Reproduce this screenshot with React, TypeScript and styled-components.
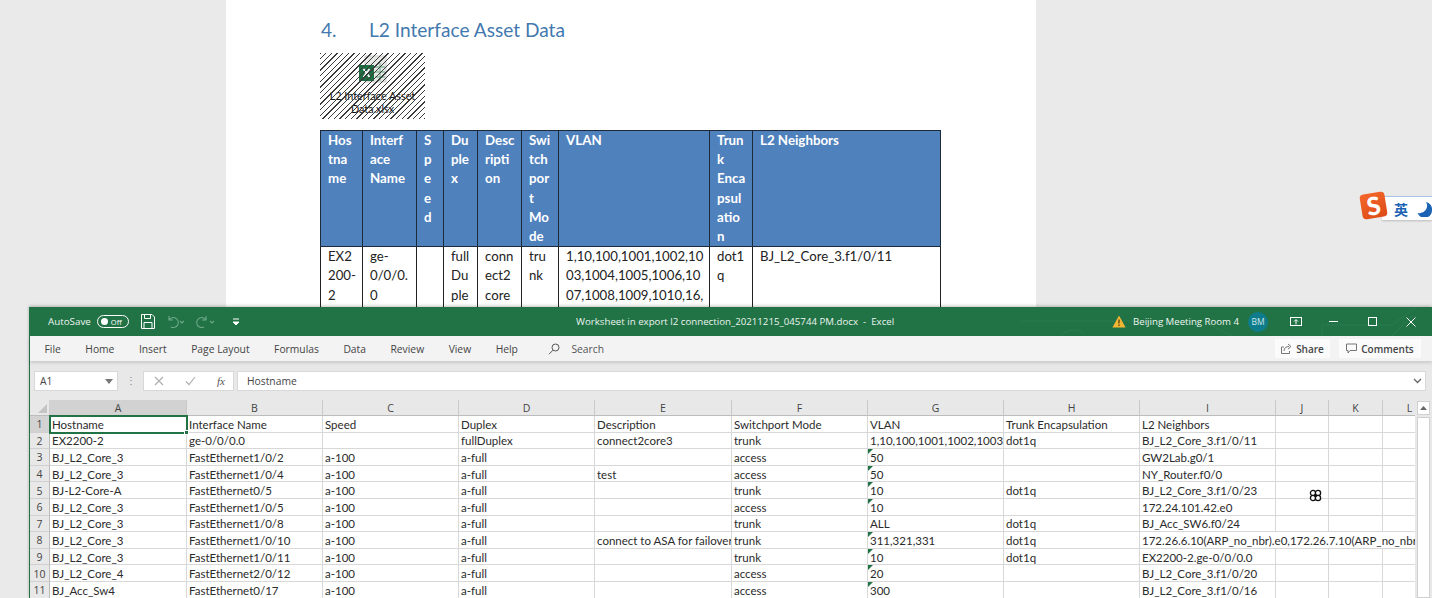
import React from "react";
import styled, { createGlobalStyle } from "styled-components";

const Global = createGlobalStyle`
  html, body { margin: 0; padding: 0; width: 100%; height: 100%; overflow: hidden; background: #eaeaea; }
  #root { width: 1432px; height: 598px; overflow: hidden; position: relative; }
`;

const Desk = styled.div`
  width: 1432px; height: 598px; position: relative; overflow: hidden;
  display: flex; justify-content: flex-start; background: #eaeaea;
`;
const DocPage = styled.div`
  margin-left: 226px; width: 810px; height: 598px; background: #fff; box-sizing: border-box;
  padding: 17px 0 0 94px;
  font-family: Lato, "Liberation Sans", sans-serif; color: #1f1f1f;
`;
const Heading = styled.h2`
  margin: 0 0 0 1px; display: flex; font-weight: 400; font-size: 19.1px; line-height: 25px; color: #4379ae;
  font-family: Lato, "Liberation Sans", sans-serif;
`;
const HeadingNum = styled.span` width: 48px; `;
const Embed = styled.div`
  margin-top: 11px; width: 105px; height: 66px; position: relative; display: flex; flex-direction: column; align-items: center;
  background: #fff;
  &::after {
    content: ""; position: absolute; inset: 0;
    background: repeating-linear-gradient(135deg, #3a3a3a 0, #3a3a3a .9px, transparent .9px, transparent 4px);
  }
`;
const EmbedIcon = styled.svg` margin-top: 2px; display: block; `;
const EmbedLabel = styled.div`
  margin-top: 7px; font-size: 10.8px; line-height: 12.5px; text-align: center; color: #111; white-space: nowrap;
`;
const DocTable = styled.table`
  margin-top: 11px; border-collapse: collapse; table-layout: fixed; width: 620px;
  font-size: 13.2px; line-height: 19.2px;
`;
const DocHead = styled.th`
  background: #4f81bd; color: #fff; border: 1px solid #1c2a3a; text-align: left; vertical-align: top; font-weight: 700;
  padding: 0 2px 0 7px; height: 115px; box-sizing: border-box; font-size: 13.3px;
`;
const DocCell = styled.td`
  border: 1px solid #222; vertical-align: top; padding: 0 2px 0 7px; background: #fff; color: #222; height: 120px;
`;

const Win = styled.div`
  position: absolute; left: 29px; top: 307px; width: 1403px; height: 291px; display: flex; flex-direction: column;
  background: #e8e8e8; border-left: 1px solid #217346; box-sizing: border-box; box-shadow: 0 -1px 3px rgba(0,0,0,.25);
  font-family: "Open Sans", "Noto Sans", sans-serif;
`;
const TitleBar = styled.div`
  height: 29px; flex: none; background: #217346; color: #fff; display: flex; align-items: center; position: relative; overflow: hidden;
  font-size: 10px; 
`;
const TitleLeft = styled.div` width: 546px; flex: none; display: flex; align-items: center; padding-left: 18px; box-sizing: border-box; `;
const AutoSave = styled.span` font-size: 9.8px; color: #eef5f0; `;
const Toggle = styled.span`
  margin-left: 6px; width: 32px; height: 13px; border: 1px solid #fff; border-radius: 7px; display: flex; align-items: center; box-sizing: border-box;
  padding: 0 1px; font-size: 7.5px; gap: 3px; 
`;
const Knob = styled.span` width: 7px; height: 7px; margin-left: 2px; border-radius: 50%; background: #fff; `;
const QuickIcon = styled.svg<{ $ml: number }>` margin-left: ${p => p.$ml}px; flex: none; display: block; `;
const TitleText = styled.div` font-size: 9.7px; color: #eaf3ee; white-space: nowrap; `;
const TitleRight = styled.div` margin-left: auto; display: flex; align-items: center; padding-right: 16px; position: relative; z-index: 1; `;
const RoomName = styled.span` margin-left: 7px; font-size: 9.65px; color: #eef5f0; white-space: nowrap; `;
const Avatar = styled.span`
  margin-left: 9px; width: 20px; height: 20px; border-radius: 50%; background: #0e7c8a; color: #cfe7ea; font-size: 8.5px;
  display: flex; align-items: center; justify-content: center;
`;
const Circuit = styled.svg` position: absolute; right: 0; top: 0; opacity: .35; `;

const Ribbon = styled.div`
  height: 25px; flex: none; background: #f3f3f3; display: flex; align-items: center; padding-left: 14.5px; gap: 24.5px;
  font-size: 10.3px; color: #444; box-shadow: 0 2px 3px rgba(0,0,0,.13); position: relative; z-index: 1;
`;
const Tab = styled.span` white-space: nowrap; `;
const SearchBox = styled.span` display: flex; align-items: center; gap: 11px; margin-left: 6px; color: #555; `;
const RibbonRight = styled.div` margin-left: auto; display: flex; gap: 9px; padding-right: 11px; `;
const RibbonBtn = styled.span<{ $w: number }>`
  height: 19px; background: #fbfbfb; border-radius: 1px; display: flex; align-items: center; justify-content: center; gap: 4px;
  padding: 0 5px; color: #444; font-size: 10px; font-weight: 600; box-sizing: border-box; width: ${p => p.$w}px;
`;

const FormulaRow = styled.div`
  height: 39px; flex: none; display: flex; align-items: flex-start; padding: 10px 6px 0 4px; box-sizing: border-box; background: #e8e8e8;
  font-size: 10.3px; color: #444;
`;
const NameBox = styled.div`
  width: 84px; height: 20px; background: #fff; border: 1px solid #d8d8d8; box-sizing: border-box; display: flex; align-items: center;
  justify-content: space-between; padding: 0 4px 0 5px;
`;
const Dots = styled.div` width: 25px; text-align: center; color: #888; font-size: 10px; line-height: 18px; `;
const FxBox = styled.div`
  width: 91px; height: 20px; background: #fff; border: 1px solid #d8d8d8; box-sizing: border-box; display: flex; align-items: center;
  padding: 0 8px 0 10px; justify-content: space-between; color: #555;
`;
const Fx = styled.span` font-family: "Liberation Serif", serif; font-style: italic; font-size: 11px; `;
const FormulaInput = styled.div`
  flex: 1; margin-left: 3px; height: 20px; background: #fff; border: 1px solid #d8d8d8; box-sizing: border-box;
  display: flex; align-items: center; justify-content: space-between; padding: 0 3px 0 9px;
`;

const SheetWrap = styled.div` flex: 1; min-height: 0; display: flex; overflow: hidden; background: #fff; `;
const Grid = styled.div`
  flex: 1; min-width: 0; overflow: hidden; display: grid;
  grid-template-columns: 20px 137px 136px 136px 136px 137px 136px 136px 136px 136px 53px 54px 54px;
  grid-template-rows: 16px repeat(11, 16.6px);
  font-family: Lato, "Liberation Sans", sans-serif; font-size: 11.5px; color: #2b2b2b;
`;
const Corner = styled.div`
  background: #e8e8e8; border-right: 1px solid #cfcfcf; border-bottom: 1px solid #bcbcbc; position: relative; box-sizing: border-box;
  &::after { content: ""; position: absolute; right: 2px; bottom: 2px; border-style: solid; border-width: 0 0 9px 9px; border-color: transparent transparent #c4c4c4 transparent; }
`;
const ColHead = styled.div<{ $on?: boolean }>`
  background: ${p => (p.$on ? "#d2d2d2" : "#e8e8e8")}; border-right: 1px solid #c9c9c9; border-bottom: 1px solid ${p => (p.$on ? "#217346" : "#bcbcbc")}; box-sizing: border-box;
  display: flex; align-items: center; justify-content: center; font-size: 10.5px; color: #444; font-family: "Open Sans", sans-serif;
`;
const RowHead = styled.div<{ $on?: boolean }>`
  background: ${p => (p.$on ? "#d2d2d2" : "#e8e8e8")}; border-right: 1px solid ${p => (p.$on ? "#217346" : "#bcbcbc")}; border-bottom: 1px solid #d0d0d0; box-sizing: border-box;
  display: flex; align-items: center; justify-content: center; padding-top: 1px; font-size: 10.5px; color: #444; font-family: "Open Sans", sans-serif;
`;
const Cell = styled.div<{ $span?: number; $flag?: boolean; $sel?: boolean }>`
  grid-column: span ${p => p.$span ?? 1}; border-right: 1px solid #d8d8d8; border-bottom: 1px solid #d8d8d8; box-sizing: border-box;
  padding: 1px 0 0 2px; white-space: nowrap; overflow: ${p => (p.$sel ? "visible" : "hidden")}; display: flex; align-items: center; position: relative; background: #fff;
  ${p => p.$flag ? `&::before { content: ""; position: absolute; left: 0; top: 0; border-style: solid; border-width: 5px 5px 0 0; border-color: #217346 transparent transparent transparent; }` : ""}
  ${p => p.$sel ? `outline: 2px solid #217346; outline-offset: -1px; z-index: 1;
    &::after { content: ""; position: absolute; right: -3px; bottom: -3px; width: 5px; height: 5px; background: #217346; border: 1px solid #fff; box-sizing: border-box; }` : ""}
`;
const Scroll = styled.div`
  width: 17px; flex: none; background: #e8e8e8; display: flex; flex-direction: column; align-items: center; padding-top: 1px; box-sizing: border-box;
`;
const ScrollBtn = styled.div`
  width: 13px; height: 14px; background: #fff; border: 1px solid #d0d0d0; box-sizing: border-box; display: flex; align-items: center; justify-content: center;
`;
const ScrollThumb = styled.div` width: 13px; flex: 1; margin-top: 2px; background: #fff; border: 1px solid #d0d0d0; box-sizing: border-box; `;

const Sogou = styled.div` position: absolute; left: 1360px; top: 192px; width: 72px; height: 28px; `;
const SogouBar = styled.div`
  position: absolute; left: 22px; top: 4px; right: 0; height: 23px; background: #fff; border-top: 1px solid #a9c4e4; box-shadow: 0 1px 2px rgba(0,0,0,.2);
  display: flex; align-items: center; padding-left: 12px; gap: 8px; color: #1c63b3; font-size: 14px; font-weight: 700;
  font-family: "Noto Sans CJK SC", sans-serif;
`;
const SogouLogo = styled.div`
  position: absolute; left: 1px; top: 1px; width: 25px; height: 25px; border-radius: 4px; transform: rotate(-9deg);
  background: linear-gradient(160deg, #f4672a, #dd4a18); color: #fff; font: 900 25px/25px Lato, sans-serif; text-align: center; z-index: 1;
`;
const CursorMark = styled.svg` position: absolute; left: 1309px; top: 489px; `;

const docHead = [
  <>Hos<br />tna<br />me</>, <>Interf<br />ace<br />Name</>, <>S<br />p<br />e<br />e<br />d</>, <>Du<br />ple<br />x</>,
  <>Desc<br />ripti<br />on</>, <>Swi<br />tch<br />por<br />t<br />Mo<br />de</>, <>VLAN</>,
  <>Trun<br />k<br />Enca<br />psul<br />atio<br />n</>, <>L2 Neighbors</>,
];
const docRow = [
  <>EX2<br />200-<br />2</>, <>ge-<br />0/0/0.<br />0</>, <></>, <>full<br />Du<br />ple</>, <>conn<br />ect2<br />core</>, <>tru<br />nk</>,
  <>1,10,100,1001,1002,10<br />03,1004,1005,1006,10<br />07,1008,1009,1010,16,</>, <>dot1<br />q</>, <>BJ_L2_Core_3.f1/0/11</>,
];
const docCols = [42, 54, 27, 34, 44, 37, 151, 43, 188];

const cols = ["A", "B", "C", "D", "E", "F", "G", "H", "I", "J", "K", "L"];
type R = [string, string, string, string, string, string, string, boolean, string, string];
const rows: R[] = [
  ["EX2200-2", "ge-0/0/0.0", "", "fullDuplex", "connect2core3", "trunk", "1,10,100,1001,1002,1003,1004,1005", false, "dot1q", "BJ_L2_Core_3.f1/0/11"],
  ["BJ_L2_Core_3", "FastEthernet1/0/2", "a-100", "a-full", "", "access", "50", true, "", "GW2Lab.g0/1"],
  ["BJ_L2_Core_3", "FastEthernet1/0/4", "a-100", "a-full", "test", "access", "50", true, "", "NY_Router.f0/0"],
  ["BJ-L2-Core-A", "FastEthernet0/5", "a-100", "a-full", "", "trunk", "10", true, "dot1q", "BJ_L2_Core_3.f1/0/23"],
  ["BJ_L2_Core_3", "FastEthernet1/0/5", "a-100", "a-full", "", "access", "10", true, "", "172.24.101.42.e0"],
  ["BJ_L2_Core_3", "FastEthernet1/0/8", "a-100", "a-full", "", "trunk", "ALL", false, "dot1q", "BJ_Acc_SW6.f0/24"],
  ["BJ_L2_Core_3", "FastEthernet1/0/10", "a-100", "a-full", "connect to ASA for failover", "trunk", "311,321,331", true, "dot1q", "172.26.6.10(ARP_no_nbr).e0,172.26.7.10(ARP_no_nbr).e0"],
  ["BJ_L2_Core_3", "FastEthernet1/0/11", "a-100", "a-full", "", "trunk", "10", true, "dot1q", "EX2200-2.ge-0/0/0.0"],
  ["BJ_L2_Core_4", "FastEthernet2/0/12", "a-100", "a-full", "", "access", "20", true, "", "BJ_L2_Core_3.f1/0/20"],
  ["BJ_Acc_Sw4", "FastEthernet0/17", "a-100", "a-full", "", "access", "300", true, "", "BJ_L2_Core_3.f1/0/16"],
];
const head = ["Hostname", "Interface Name", "Speed", "Duplex", "Description", "Switchport Mode", "VLAN", "Trunk Encapsulation", "L2 Neighbors"];

const Chevron = ({ c = "#666" }: { c?: string }) => (
  <svg width="9" height="6" viewBox="0 0 9 6"><path d="M1 1l3.5 3.5L8 1" fill="none" stroke={c} strokeWidth="1.3" /></svg>
);

export default function App() {
  return (
    <Desk>
      <Global />
      <DocPage>
        <Heading><HeadingNum>4.</HeadingNum>L2 Interface Asset Data</Heading>
        <Embed>
          <EmbedIcon width="28" height="28" viewBox="0 0 28 28">
            <rect x="6" y="1" width="21" height="26" fill="#e6e8e6" stroke="#cfcfcf" />
            <path d="M16 12h10M16 17h10M16 22h10M21 8v18" stroke="#8dbba0" strokeWidth="1.4" />
            <rect x="0" y="10" width="15" height="16" fill="#1d6f42" />
            <path d="M4.500 14l6 8M10.500 14l-6 8" stroke="#fff" strokeWidth="1.700" />
          </EmbedIcon>
          <EmbedLabel>L2 Interface Asset<br />Data.xlsx</EmbedLabel>
        </Embed>
        <DocTable>
          <colgroup>{docCols.map((w, i) => <col key={i} style={{ width: w }} />)}</colgroup>
          <thead><tr>{docHead.map((h, i) => <DocHead key={i}>{h}</DocHead>)}</tr></thead>
          <tbody><tr>{docRow.map((h, i) => <DocCell key={i}>{h}</DocCell>)}</tr></tbody>
        </DocTable>
      </DocPage>

      <Sogou>
        <SogouLogo>S</SogouLogo>
        <SogouBar>
          <span>英</span>
          <svg width="16" height="16" viewBox="0 0 16 16"><path d="M10 1a7.5 7.5 0 0 1-8.5 11A7.5 7.5 0 0 0 16 9 7.5 7.5 0 0 0 10 1z" fill="#1c63b3" /></svg>
        </SogouBar>
      </Sogou>

      <Win>
        <TitleBar>
          <TitleLeft>
            <AutoSave>AutoSave</AutoSave>
            <Toggle><Knob /><span>Off</span></Toggle>
            <QuickIcon $ml={12} width="14" height="15" viewBox="0 0 14 15" fill="none" stroke="#fff" strokeWidth="1">
              <path d="M.5.5h10.500l2.500 2.500v11.500H.5z" /><path d="M3.500.5v4h6v-4M3 14.500v-6h8v6" />
            </QuickIcon>
            <QuickIcon $ml={10} width="20" height="14" viewBox="0 0 20 14" fill="none" stroke="#6ea888" strokeWidth="1.100">
              <path d="M4 1v4h4M4 5a5 5 0 1 1 2 7" /><path d="M15 6l2 2 2-2" />
            </QuickIcon>
            <QuickIcon $ml={10} width="20" height="14" viewBox="0 0 20 14" fill="none" stroke="#6ea888" strokeWidth="1.100">
              <path d="M11 1v4H7M11 5a5 5 0 1 0-2 7" /><path d="M15 6l2 2 2-2" />
            </QuickIcon>
            <QuickIcon $ml={17} width="8" height="8" viewBox="0 0 8 8" fill="none" stroke="#fff" strokeWidth="1">
              <path d="M1 1h6" /><path d="M1 4l3 3 3-3z" fill="#fff" />
            </QuickIcon>
          </TitleLeft>
          <TitleText>Worksheet in export l2 connection_20211215_045744 PM.docx&nbsp; -&nbsp; Excel</TitleText>
          <Circuit width="430" height="29" viewBox="0 0 430 29" fill="none" stroke="#3f8a60" strokeWidth="1">
            <path d="M20 14h180l30 15M60 29c4-8 20-8 24 0M320 29V18h70l24-18M390 29l20-20" />
          </Circuit>
          <TitleRight>
            <svg width="14" height="13" viewBox="0 0 14 13"><path d="M7 .5L13.600 12.500H.4z" fill="#f2b632" /><path d="M7 4.500v4M7 9.500v1.500" stroke="#4a3a10" strokeWidth="1.200" /></svg>
            <RoomName>Beijing Meeting Room 4</RoomName>
            <Avatar>BM</Avatar>
            <QuickIcon $ml={22} width="12" height="9" viewBox="0 0 12 9" fill="none" stroke="#fff" strokeWidth="1">
              <rect x=".5" y=".5" width="11" height="8" /><path d="M6 7.500V3M4 4.500L6 2.500l2 2" />
            </QuickIcon>
            <QuickIcon $ml={27} width="9" height="1" viewBox="0 0 9 1" stroke="#fff"><path d="M0 .5h9" /></QuickIcon>
            <QuickIcon $ml={30} width="9" height="9" viewBox="0 0 9 9" fill="none" stroke="#fff"><rect x=".5" y=".5" width="8" height="8" /></QuickIcon>
            <QuickIcon $ml={29} width="10" height="10" viewBox="0 0 10 10" stroke="#fff"><path d="M.5.5l9 9M9.500.5l-9 9" /></QuickIcon>
          </TitleRight>
        </TitleBar>

        <Ribbon>
          {["File", "Home", "Insert", "Page Layout", "Formulas", "Data", "Review", "View", "Help"].map(t => <Tab key={t}>{t}</Tab>)}
          <SearchBox>
            <svg width="12" height="12" viewBox="0 0 12 12" fill="none" stroke="#555" strokeWidth="1"><circle cx="7.500" cy="4.500" r="3.500" /><path d="M5 7.200L1 11.200" /></svg>
            Search
          </SearchBox>
          <RibbonRight>
            <RibbonBtn $w={55}>
              <svg width="11" height="11" viewBox="0 0 11 11" fill="none" stroke="#666" strokeWidth=".9"><path d="M3 4H.5v6.500h8V8" /><path d="M3 8c0-3 2-4.500 5-4.500M7 1l3 2.500-3 2.500" /></svg>
              Share
            </RibbonBtn>
            <RibbonBtn $w={82}>
              <svg width="11" height="11" viewBox="0 0 11 11" fill="none" stroke="#666" strokeWidth=".9"><path d="M.5 1h10v6.500H4L2 10V7.500H.5z" /></svg>
              Comments
            </RibbonBtn>
          </RibbonRight>
        </Ribbon>

        <FormulaRow>
          <NameBox>A1<svg width="8" height="5" viewBox="0 0 8 5"><path d="M0 0h8L4 5z" fill="#777" /></svg></NameBox>
          <Dots>⋮</Dots>
          <FxBox>
            <svg width="10" height="10" viewBox="0 0 10 10" stroke="#b0b0b0" strokeWidth="1.200"><path d="M1 1l8 8M9 1l-8 8" /></svg>
            <svg width="11" height="10" viewBox="0 0 11 10" fill="none" stroke="#b0b0b0" strokeWidth="1.200"><path d="M1 5.500l3 3L10 1" /></svg>
            <Fx>fx</Fx>
          </FxBox>
          <FormulaInput>Hostname<Chevron /></FormulaInput>
        </FormulaRow>

        <SheetWrap>
          <Grid>
            <Corner />
            {cols.map((c, i) => <ColHead key={c} $on={i === 0}>{c}</ColHead>)}
            <RowHead $on>1</RowHead>
            {head.map((h, i) => <Cell key={h} $sel={i === 0}>{h}</Cell>)}
            <Cell /><Cell /><Cell />
            {rows.map((r, i) => {
              const wide = r[9].length > 30;
              return (
                <React.Fragment key={i}>
                  <RowHead>{i + 2}</RowHead>
                  {r.slice(0, 6).map((v, j) => <Cell key={j}>{v as string}</Cell>)}
                  <Cell $flag={r[7]}>{r[6]}</Cell>
                  <Cell>{r[8]}</Cell>
                  <Cell $span={wide ? 4 : 1}>{r[9]}</Cell>
                  {!wide && <><Cell /><Cell /><Cell /></>}
                </React.Fragment>
              );
            })}
          </Grid>
          <Scroll>
            <ScrollBtn><svg width="7" height="4" viewBox="0 0 7 4"><path d="M0 4L3.500 0 7 4z" fill="#666" /></svg></ScrollBtn>
            <ScrollThumb />
          </Scroll>
        </SheetWrap>
      </Win>

      <CursorMark width="13" height="13" viewBox="0 0 13 13">
        <circle cx="4" cy="4" r="2.600" fill="#fff" stroke="#111" strokeWidth="1.300" />
        <circle cx="9" cy="4" r="2.600" fill="#fff" stroke="#111" strokeWidth="1.300" />
        <circle cx="4" cy="9" r="2.600" fill="#fff" stroke="#111" strokeWidth="1.300" />
        <circle cx="9" cy="9" r="2.600" fill="#fff" stroke="#111" strokeWidth="1.300" />
        <circle cx="6.500" cy="6.500" r="1.500" fill="#111" />
      </CursorMark>
    </Desk>
  );
}
